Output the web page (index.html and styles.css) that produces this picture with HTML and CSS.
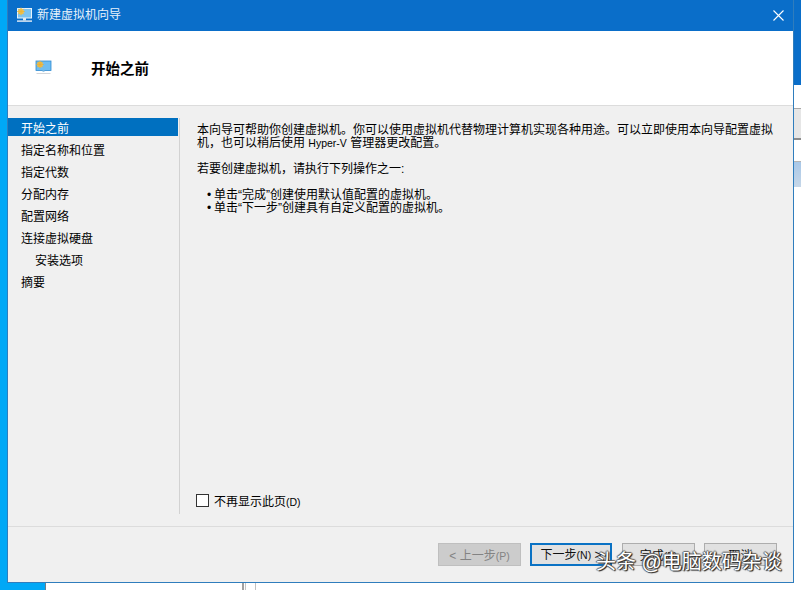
FILE: index.html
```html
<!DOCTYPE html>
<html lang="zh-CN">
<head>
<meta charset="utf-8">
<title>新建虚拟机向导</title>
<link rel="stylesheet" href="styles.css">
</head>
<body>
<div class="desktop">
  <div class="back-left"></div>
  <div class="back-bottom-left"></div>
  <div class="back-line back-line-a"></div>
  <div class="back-line back-line-b"></div>
  <div class="back-line back-line-c"></div>
  <div class="back-right">
    <div class="br-blue"></div>
    <div class="br-white"></div>
    <div class="br-pale"></div>
    <div class="br-white2"></div>
    <div class="br-grad"></div>
  </div>

  <div class="window">
    <div class="titlebar">
      <svg class="title-icon" viewBox="0 0 16 16" width="16" height="16" aria-hidden="true">
        <rect x="1.500" y="1.500" width="14" height="9.500" fill="#7cc4f2" stroke="#e6f3fc" stroke-width="1"/>
        <circle cx="5" cy="4.500" r="2.900" fill="#f5c64e"/>
        <path d="M5 .6v7.800M1.100 4.500h7.800M2.200 1.700l5.600 5.600M7.800 1.700l-5.600 5.600" stroke="#eab53e" stroke-width=".8"/>
        <rect x="7" y="11" width="3" height="2.400" fill="#dfeaf3"/>
        <rect x="1" y="13.400" width="15" height="1.400" fill="#e6eef5"/>
      </svg>
      <span class="title-text">新建虚拟机向导</span>
      <svg class="close-icon" viewBox="0 0 11 11" width="11" height="11" aria-hidden="true">
        <path d="M.5 .5l10 10M10.500 .5l-10 10" stroke="#fff" stroke-width="1.100" fill="none"/>
      </svg>
    </div>

    <header class="page-head">
      <svg class="head-icon" viewBox="0 0 18 16" width="18" height="16" aria-hidden="true">
        <rect x="1" y="2" width="15" height="9.500" fill="#6fbdf0" stroke="#2f8ad2" stroke-width=".8"/>
        <circle cx="5" cy="5.500" r="2.900" fill="#f2bf47"/>
        <path d="M5 1.600v7.800M1.100 5.500h7.800M2.200 2.700l5.600 5.600M7.800 2.700l-5.600 5.600" stroke="#e5ad38" stroke-width=".7"/>
        <rect x="7.500" y="11.500" width="2" height="1.500" fill="#9fc9e6"/>
        <rect x="1.500" y="14" width="14" height="1" fill="#d3d6da"/>
      </svg>
      <h1 class="page-title">开始之前</h1>
    </header>

    <div class="main">
      <nav class="steps">
        <div class="step step-active">开始之前</div>
        <div class="step">指定名称和位置</div>
        <div class="step">指定代数</div>
        <div class="step">分配内存</div>
        <div class="step">配置网络</div>
        <div class="step">连接虚拟硬盘</div>
        <div class="step step-sub">安装选项</div>
        <div class="step">摘要</div>
      </nav>
      <section class="content">
        <div class="copy">
          <p class="para">本向导可帮助你创建虚拟机。你可以使用虚拟机代替物理计算机实现各种用途。可以立即使用本向导配置虚拟机，也可以稍后使用 <span class="latin">Hyper-V</span> 管理器更改配置。</p>
          <p class="para">若要创建虚拟机，请执行下列操作之一:</p>
          <ul class="bullets">
            <li>单击“完成”创建使用默认值配置的虚拟机。</li>
            <li>单击“下一步”创建具有自定义配置的虚拟机。</li>
          </ul>
        </div>
        <label class="check-row">
          <span class="checkbox"></span>
          <span>不再显示此页<span class="latin">(D)</span></span>
        </label>
      </section>
    </div>

    <footer class="actions">
      <button class="btn btn-disabled" type="button">&lt; 上一步<span class="latin">(P)</span></button>
      <button class="btn btn-next btn-primary" type="button">下一步<span class="latin">(N)</span> &gt;</button>
      <button class="btn btn-finish" type="button">完成<span class="latin">(F)</span></button>
      <button class="btn btn-finish" type="button">取消</button>
    </footer>
  </div>

  <div class="watermark">头条 @电脑数码杂谈</div>
</div>
</body>
</html>
```
FILE: styles.css
```css
* { box-sizing: border-box; }
html, body { margin: 0; padding: 0; background: #fff; }
body {
  font-family: "Liberation Sans", "Noto Sans CJK SC", sans-serif;
  font-size: 12px;
  color: #000;
}
.latin { font-size: 10.5px; line-height: 0; }
.desktop { position: relative; width: 801px; height: 590px; overflow: hidden; background: #fff; }
.back-left { position: absolute; left: 0; top: 0; width: 8px; height: 590px; background: #00a8f6; }
.back-bottom-left { position: absolute; left: 0; top: 583px; width: 46px; height: 7px; background: #00a8f6; border-right: 1px solid #6d7d8a; }
.back-line { position: absolute; top: 583px; height: 7px; }
.back-line-a { left: 242px; width: 2px; background: #a0a0a0; }
.back-line-b { left: 245px; width: 1px; background: #c4c4c4; }
.back-line-c { left: 255px; width: 1px; background: #c0c0c0; }
.back-right { position: absolute; left: 794px; top: 0; width: 7px; height: 590px; display: flex; flex-direction: column; background: #fff; }
.br-blue { height: 85px; background: #0a6ec9; }
.br-white { height: 24px; background: #fff; border-bottom: 1px solid #a9a9a9; }
.br-pale { height: 31px; background: #e6e6e6; border-bottom: 2px solid #8c8c8c; }
.br-white2 { height: 22px; background: #fff; border-bottom: 1px solid #b5b5b5; }
.br-grad { height: 25px; background: linear-gradient(#a9c8e8, #c6d7e8); }

.window {
  position: absolute; left: 7px; top: 0; width: 787px; height: 583px;
  display: flex; flex-direction: column;
  background: #f0f0f0;
  border: 1px solid #2f7dbd; border-top: 0;
}
.titlebar { height: 31px; flex: none; display: flex; align-items: center; background: #0a6ec9; padding: 0 9px 0 8px; color: #e8f2fb; }
.title-icon { margin-right: 5px; margin-top: -1px; }
.title-text { flex: 1; font-size: 12px; line-height: 12px; margin-top: -2px; }
.close-icon { flex: none; margin-top: -1px; }
.page-head { height: 75px; flex: none; display: flex; align-items: center; background: #fff; border-bottom: 1px solid #dcdcdc; padding: 0 0 0 27px; }
.head-icon { margin-right: 38px; margin-top: -2px; }
.page-title { margin: 2px 0 0; font-size: 14.500px; font-weight: 700; color: #000; line-height: 18px; }

.main { flex: 1; min-height: 0; display: flex; padding-top: 12px; height: 408px; }
.steps { width: 172px; flex: none; height: 396px; border-right: 1px solid #d2d2d2; padding-right: 1px; }
.step { height: 18px; line-height: 23px; padding-left: 13px; margin-bottom: 4px; }
.step-active { background: #0070c0; color: #fff; }
.step-sub { padding-left: 27px; }
.content { flex: 1; display: flex; flex-direction: column; justify-content: space-between; padding-left: 17px; height: 396px; }
.copy { width: 580px; padding-top: 6px; line-height: 13px; }
.para { margin: 0 0 13px; }
.bullets { list-style: none; margin: 0; padding: 0 0 0 10px; }
.bullets li { position: relative; padding-left: 7px; }
.bullets li::before { content: "•"; position: absolute; left: 0; top: 0; }
.check-row { display: flex; align-items: center; gap: 5px; height: 14px; margin-bottom: 7px; margin-left: -1px; }
.checkbox { width: 13px; height: 13px; background: #fff; border: 1px solid #333; flex: none; }

.actions { height: 56px; flex: none; display: flex; border-top: 1px solid #dcdcdc; padding: 16px 0 0 430px; }
.btn { height: 23px; padding: 2px 0 0; font: 12px "Liberation Sans", "Noto Sans CJK SC", sans-serif; color: #111; background: #e1e1e1; border: 1px solid #adadad; line-height: 1; }
.btn-disabled { width: 83px; margin-right: 9px; background: #cccccc; border-color: #bfbfbf; color: #838383; }
.btn-next { width: 82px; margin-right: 10px; padding-top: 1px; }
.btn-primary { border: 2px solid #0a72c4; }
.btn-finish { width: 73px; margin-right: 9px; }

.watermark {
  position: absolute; left: 596px; top: 550px;
  font-size: 20px; line-height: 24px; white-space: nowrap;
  color: #fff;
  text-shadow: 1px 1px 1px #222, -1px 0 1px #555, 0 -1px 1px #666, 1px 0 1px #444;
}
```
